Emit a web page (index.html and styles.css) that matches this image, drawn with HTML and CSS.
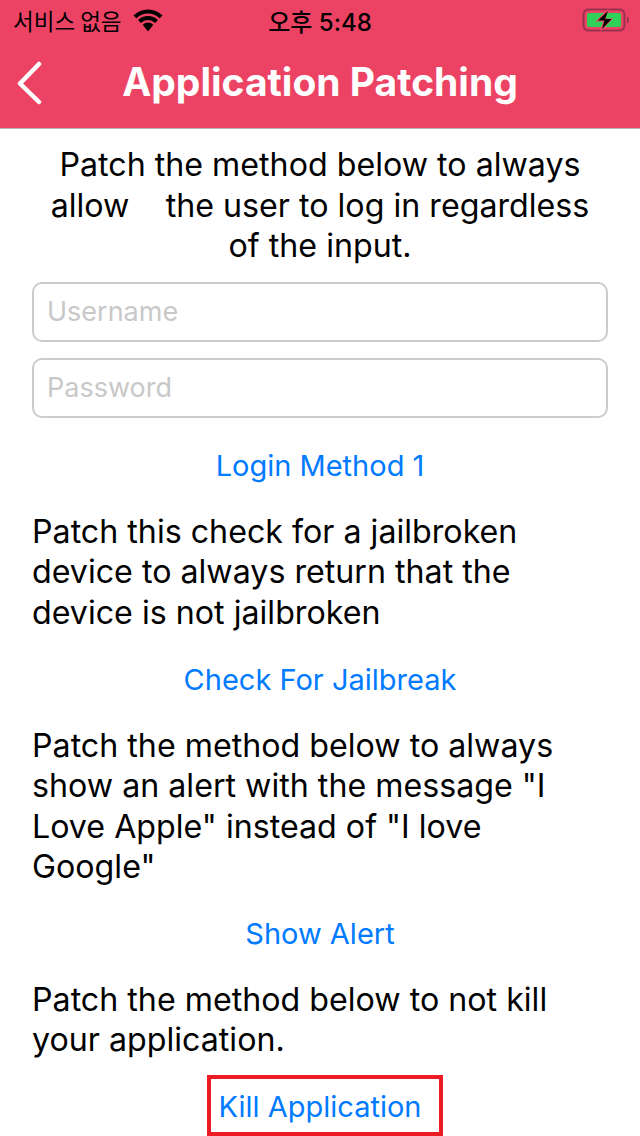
FILE: index.html
```html
<!doctype html>
<html lang="en">
<head>
	<meta charset="UTF-8">
	<title>Application Patching</title>
	<link rel="stylesheet" href="styles.css">
</head>
<body>
<div class="header">
	<div class="status">
		<div class="status-left">
			<span class="carrier">서비스 없음</span>
			<svg class="wifi" width="30" height="22" viewBox="0 0 30 22">
				<path d="M15 22.500L9.700 15.700a7.500 7.500 0 0 1 10.600 0z" fill="#000"/>
				<path d="M6.510 12.510a12 12 0 0 1 16.980 0" fill="none" stroke="#000" stroke-width="4"/>
				<path d="M1.920 7.920a18.500 18.500 0 0 1 26.160 0" fill="none" stroke="#000" stroke-width="4"/>
			</svg>
		</div>
		<span class="time">오후 5:48</span>
		<svg class="battery" width="48" height="24" viewBox="0 0 48 24">
			<rect x="1.5" y="1.5" width="41" height="21" rx="5" fill="none" stroke="#99304f" stroke-width="2"/>
			<rect x="5" y="5" width="34" height="14" rx="2" fill="#30d158"/>
			<path d="M45 8.5c1.5.6 2 2 2 3.500s-.5 2.900-2 3.500z" fill="#99304f"/>
			<path d="M27 0L13.500 13.500H21L18 24l13-13.500h-7.500z" fill="#ec4365"/>
			<path d="M26 3L16 12.500h6.500L20 21l9.500-10H23z" fill="#000"/>
		</svg>
	</div>
	<div class="nav">
		<svg class="back" width="28" height="44" viewBox="0 0 28 44">
			<path d="M24 3L5 22.500 24 41" fill="none" stroke="#fff" stroke-width="4.500" stroke-linecap="round" stroke-linejoin="round"/>
		</svg>
		<h1 class="title">Application Patching</h1>
	</div>
</div>

<div class="main">
	<p class="text center">Patch the method below to always<br>allow &nbsp;&nbsp;&nbsp;the user to log in regardless<br>of the input.</p>
	<input class="field" type="text" placeholder="Username">
	<input class="field" type="password" placeholder="Password">
	<button class="link" type="button">Login Method 1</button>

	<p class="text">Patch this check for a jailbroken<br>device to always return that the<br>device is not jailbroken</p>
	<button class="link" type="button">Check For Jailbreak</button>

	<p class="text">Patch the method below to always<br>show an alert with the message "I<br>Love Apple" instead of "I love<br>Google"</p>
	<button class="link" type="button">Show Alert</button>

	<p class="text">Patch the method below to not kill<br>your application.</p>
	<button class="link" type="button">Kill Application</button>
</div>
<div class="marker"></div>
</body>
</html>
```

FILE: styles.css
```css
html, body {
	margin: 0;
	height: 1136px;
	overflow: hidden;
	background: #fff;
}
body {
	position: relative;
	font-family: Inter, "Noto Sans CJK KR", sans-serif;
	color: #000;
}
.header {
	height: 128px;
	background: #ec4365;
	border-bottom: 1px solid #b4b4b4;
}
.status {
	position: relative;
	height: 40px;
	display: flex;
	align-items: center;
	justify-content: space-between;
	padding: 0 10px 0 13px;
}
.status-left {
	display: flex;
	align-items: center;
	gap: 11px;
}
.carrier {
	font-size: 22.500px;
	font-family: "Noto Sans CJK KR", sans-serif;
}
.time {
	position: absolute;
	left: 0;
	right: 0;
	text-align: center;
	font-size: 24px;
	font-weight: 500;
}
.nav {
	position: relative;
	height: 88px;
	display: flex;
	align-items: center;
	justify-content: center;
}
.back {
	position: absolute;
	left: 15px;
	top: 21px;
}
.title {
	margin: 0 0 6px;
	font-size: 39px;
	font-weight: 700;
	color: #fff;
}
.main {
	display: flex;
	flex-direction: column;
	padding: 16px 32px 0;
}
.text {
	margin: 0;
	font-size: 32.200px;
	line-height: 40.500px;
}
.center {
	text-align: center;
}
.field {
	box-sizing: border-box;
	width: 100%;
	height: 60px;
	margin-top: 15px;
	padding: 0 13px;
	border: 2px solid #cccccc;
	border-radius: 10px;
	font-family: inherit;
	font-size: 27px;
	outline: none;
}
.field + .field {
	margin-top: 16px;
}
.field::placeholder {
	color: #c8c8c8;
}
.field + .field + .link {
	margin-top: 28px;
}
.link {
	height: 40px;
	margin: 26px 0 26.300px;
	padding: 0;
	border: 0;
	background: none;
	color: #007aff;
	font-family: inherit;
	font-size: 29px;
}
.marker {
	position: absolute;
	left: 207px;
	top: 1075px;
	width: 236px;
	height: 61px;
	box-sizing: border-box;
	border: 4px solid #ed1c24;
}
```
